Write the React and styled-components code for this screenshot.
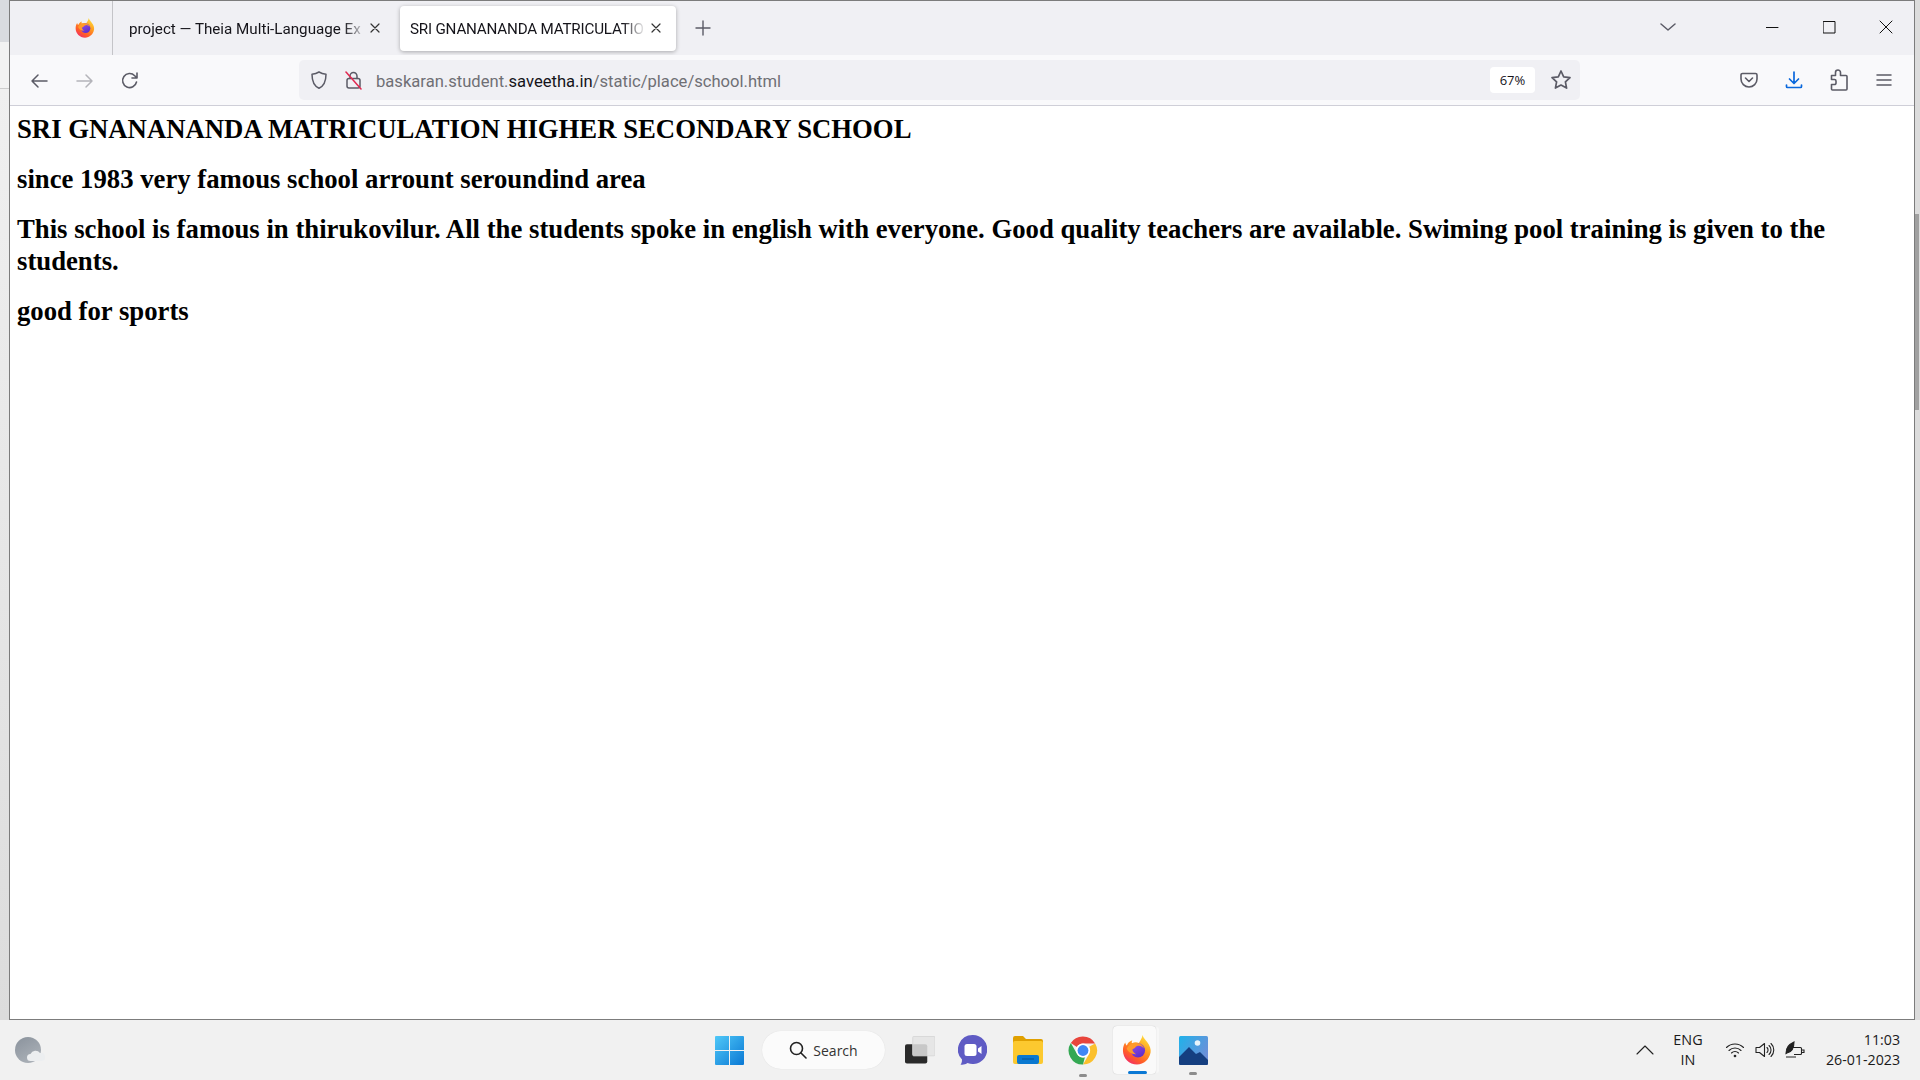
import React from "react";
import styled, { createGlobalStyle } from "styled-components";

const Global = createGlobalStyle`
  html, body { margin: 0; padding: 0; overflow: hidden; }
  body { font-family: "Open Sans", "Noto Sans", sans-serif; background: #f1f1f1; }
`;

const Screen = styled.div`
  width: 1920px;
  height: 1080px;
  display: flex;
  flex-direction: column;
  overflow: hidden;
`;
const Desktop = styled.div`
  height: 1020px;
  display: flex;
`;
const LeftEdge = styled.div`
  width: 9px;
  background: linear-gradient(
    #d9dbdf 0,
    #d9dbdf 42px,
    #f2f2f2 42px,
    #f2f2f2 88px,
    #cccccc 88px,
    #cccccc 89px,
    #f0f0f0 89px,
    #dcdcdc 100%
  );
`;
const RightEdge = styled.div`
  width: 5px;
  background: #dcdcdc;
  padding-top: 124px;
  box-sizing: border-box;
`;
const ScrollThumb = styled.div`
  width: 4px;
  height: 196px;
  margin-top: 90px;
  background: #a0a0a0;
`;
const Win = styled.div`
  flex: 1;
  display: flex;
  flex-direction: column;
  border: 1px solid #7c7c7c;
  background: #fff;
`;

const TabBar = styled.div`
  height: 54px;
  flex: none;
  display: flex;
  align-items: center;
  background: #f0f0f4;
`;
const PinnedTab = styled.div`
  width: 103px;
  height: 100%;
  box-sizing: border-box;
  display: flex;
  align-items: center;
  justify-content: center;
  padding-left: 47px;
  border-right: 1px solid #c4c4c8;
`;
const Tab = styled.div`
  width: ${(p) => p.$w}px;
  height: 45px;
  flex: none;
  padding-left: ${(p) => p.$pl}px;
  box-sizing: border-box;
  display: flex;
  align-items: center;
  border-radius: 4px;
  background: ${(p) => (p.$active ? "#fff" : "transparent")};
  box-shadow: ${(p) => (p.$active ? "0 1px 4px rgba(0,0,0,.3)" : "none")};
  color: #15141a;
  font-family: "Roboto", "Open Sans", sans-serif;
  font-size: 15.2px;
`;
const TabTitle = styled.span`
  width: ${(p) => p.$w}px;
  flex: none;
  padding-top: 1px;
  letter-spacing: ${(p) => p.$ls || 0}px;
  white-space: nowrap;
  -webkit-mask-image: linear-gradient(to right, #000 90%, transparent);
  mask-image: linear-gradient(to right, #000 90%, transparent);
`;
const TabClose = styled.span`
  margin-left: ${(p) => p.$ml}px;
  display: flex;
`;
const NewTab = styled.span`
  margin-left: 19px;
  display: flex;
`;
const TabSpacer = styled.div`
  flex: 1;
`;
const WindowButtons = styled.div`
  display: flex;
  align-items: center;
  padding-right: 20px;
  margin-top: -2px;
`;
const WinButton = styled.span`
  display: flex;
  width: 16px;
  justify-content: center;
  margin-left: ${(p) => p.$ml}px;
`;

const Toolbar = styled.div`
  height: 50px;
  flex: none;
  display: flex;
  align-items: center;
  background: #f9f9fb;
  border-bottom: 1px solid #cfcfd8;
`;
const NavButton = styled.span`
  display: flex;
  width: 20px;
  justify-content: center;
  margin-top: 1px;
  margin-left: ${(p) => p.$ml}px;
`;
const UrlBar = styled.div`
  width: 1281px;
  height: 40px;
  margin-left: 159px;
  box-sizing: border-box;
  display: flex;
  align-items: center;
  border-radius: 5px;
  background: #f0f0f4;
  padding-left: 10px;
`;
const UrlIcon = styled.span`
  display: flex;
  margin-left: ${(p) => p.$ml || 0}px;
`;
const UrlText = styled.div`
  flex: 1;
  margin-left: 13px;
  padding-top: 2px;
  font-family: "Roboto", "Open Sans", sans-serif;
  font-size: 16.6px;
  color: #6f6f74;
  white-space: nowrap;
`;
const UrlDomain = styled.span`
  color: #15141a;
`;
const ZoomPill = styled.div`
  width: 45px;
  height: 26px;
  display: flex;
  align-items: center;
  justify-content: center;
  border-radius: 4px;
  background: #fff;
  color: #15141a;
  font-size: 13px;
`;
const StarWrap = styled.span`
  display: flex;
  margin: 0 8px 0 15px;
`;
const ToolIcon = styled.span`
  display: flex;
  width: 20px;
  justify-content: center;
  margin-left: ${(p) => p.$ml}px;
`;

const Page = styled.main`
  flex: 1;
  padding: 0 7px;
  color: #000;
  font-family: "Liberation Serif", "Times New Roman", serif;
  font-weight: 700;
  font-size: 26.72px;
  line-height: 32px;
`;
const Line = styled.p`
  margin: 0;
  padding-top: ${(p) => p.$pt}px;
`;

const Taskbar = styled.footer`
  height: 60px;
  flex: none;
  display: flex;
  align-items: center;
  background: #f1f1f1;
`;
const Weather = styled.span`
  display: flex;
  margin-left: 15px;
`;
const TaskIcon = styled.span`
  position: relative;
  display: flex;
  width: 30px;
  justify-content: center;
  margin-left: ${(p) => p.$ml}px;
`;
const SearchPill = styled.div`
  width: 123px;
  height: 38px;
  margin-left: 18px;
  box-sizing: border-box;
  display: flex;
  align-items: center;
  justify-content: center;
  gap: 6px;
  border-radius: 19px;
  background: #fbfbfb;
  box-shadow: 0 0 1px rgba(0, 0, 0, 0.12);
  color: #333;
  font-size: 14px;
`;
const ActiveSlot = styled.div`
  position: relative;
  width: 43px;
  height: 48px;
  margin-left: 15px;
  padding-left: 9px;
  box-sizing: border-box;
  display: flex;
  align-items: center;
  border-radius: 4px;
  background: #fafafa;
  box-shadow: 0 0 1px rgba(0, 0, 0, 0.25), 4px 0 0 -1px #f7f7f7;
`;
const RunningMark = styled.span`
  position: absolute;
  left: ${(p) => p.$left || "50%"};
  bottom: ${(p) => p.$b}px;
  width: ${(p) => p.$w}px;
  height: 3px;
  margin-left: ${(p) => -p.$w / 2}px;
  border-radius: 2px;
  background: ${(p) => p.$c};
`;
const TrayLang = styled.div`
  width: 40px;
  margin-left: 12px;
  text-align: center;
  color: #1a1a1a;
  font-size: 14.4px;
  line-height: 20px;
`;
const TrayIcon = styled.span`
  display: flex;
  width: 22px;
  justify-content: center;
  margin-left: ${(p) => p.$ml}px;
`;
const Clock = styled.div`
  margin-left: 16px;
  width: 78px;
  text-align: right;
  white-space: nowrap;
  color: #1a1a1a;
  font-size: 14.2px;
  line-height: 20px;
`;

const Stroke = ({ w, h = w, c = "#5b5b66", sw = 1.6, children }) => (
  <svg width={w} height={h} viewBox={`0 0 ${w} ${h}`} fill="none" stroke={c} strokeWidth={sw} strokeLinecap="round" strokeLinejoin="round">
    {children}
  </svg>
);

const FirefoxLogo = ({ size }) => (
  <svg width={size} height={size} viewBox="0 0 32 32">
    <defs>
      <linearGradient id={`ffbody${size}`} x1="0.85" y1="0.05" x2="0.25" y2="1">
        <stop offset="0" stopColor="#ffe03d" />
        <stop offset="0.4" stopColor="#ff9a1f" />
        <stop offset="0.75" stopColor="#ff5a2a" />
        <stop offset="1" stopColor="#f22c6a" />
      </linearGradient>
      <linearGradient id={`ffglobe${size}`} x1="0.2" y1="0" x2="0.8" y2="1">
        <stop offset="0" stopColor="#8f4ee8" />
        <stop offset="1" stopColor="#5b2bc8" />
      </linearGradient>
    </defs>
    <path
      d="M22 0c.5 3 2.800 4.600 4.800 7.400C29.900 11.400 31 15 30.500 18.500 29.400 26 23.300 31.500 16 31.500 7.700 31.500 1 24.900 1 16.500 1 13 2 10 3.500 8c.2 1.500.8 2.600 1.700 3.300C6 8.500 8 6.500 11 5.500c-.7 1.300-.8 2.400-.3 3.300 2.300-1.200 5-1.300 7.300-.3C19.800 5.700 21.500 3 22 0z"
      fill={`url(#ffbody${size})`}
    />
    <circle cx="17" cy="16.500" r="7.600" fill={`url(#ffglobe${size})`} />
    <path d="M5 14.500c2-4 6-6.500 11-6 3.500.4 6.500 2.800 7.500 6-1.600-2.200-4-3.400-6.300-3.100-1.700.2-2.800 1.100-3.200 2.300l-3 1.800c.5 2.200 2 4 4 5-4.500.2-8.800-2.300-10-6z" fill="#ff9a2a" />
  </svg>
);

const ChromeLogo = () => (
  <svg width="31" height="31" viewBox="0 0 32 32">
    <path d="M16 1a15 15 0 0 1 13 7.500H16a7.500 7.500 0 0 0-6.500 3.800L3 8A15 15 0 0 1 16 1z" fill="#e8453c" />
    <path d="M29 8.500a15 15 0 0 1-13 22.500l6.500-11.300A7.500 7.500 0 0 0 22.500 12z" fill="#fbc02d" />
    <path d="M16 31A15 15 0 0 1 3 8l6.500 11.500A7.500 7.500 0 0 0 18 23.100z" fill="#34a853" />
    <circle cx="16" cy="16" r="7.400" fill="#fff" />
    <circle cx="16" cy="16" r="5.800" fill="#3f87f5" />
  </svg>
);

export default function App() {
  return (
    <Screen>
      <Global />
      <Desktop>
        <LeftEdge />
        <Win>
          <TabBar>
            <PinnedTab>
              <FirefoxLogo size={20} />
            </PinnedTab>
            <Tab $w={287} $pl={16}>
              <TabTitle $w={238}>project — Theia Multi-Language Ex</TabTitle>
              <TabClose $ml={2}>
                <Stroke w={12} c="#333" sw={1.2}>
                  <path d="M2 2l8 8M10 2l-8 8" />
                </Stroke>
              </TabClose>
            </Tab>
            <Tab $active $w={276} $pl={10}>
              <TabTitle $w={236} $ls={-0.2}>SRI GNANANANDA MATRICULATIO</TabTitle>
              <TabClose $ml={4}>
                <Stroke w={12} c="#333" sw={1.2}>
                  <path d="M2 2l8 8M10 2l-8 8" />
                </Stroke>
              </TabClose>
            </Tab>
            <NewTab>
              <Stroke w={16} sw={1.4}>
                <path d="M8 1v14M1 8h14" />
              </Stroke>
            </NewTab>
            <TabSpacer />
            <WindowButtons>
              <Stroke w={16} h={10} sw={1.5}>
                <path d="M1 2l7 6 7-6" />
              </Stroke>
              <WinButton $ml={88}>
                <Stroke w={13} c="#111" sw={1}>
                  <path d="M0 6.500h12" />
                </Stroke>
              </WinButton>
              <WinButton $ml={41}>
                <Stroke w={13} c="#111" sw={1}>
                  <rect x="0.500" y="0.500" width="11.500" height="11.500" />
                </Stroke>
              </WinButton>
              <WinButton $ml={41}>
                <Stroke w={14} c="#111" sw={1}>
                  <path d="M1 1l12 12M13 1L1 13" />
                </Stroke>
              </WinButton>
            </WindowButtons>
          </TabBar>
          <Toolbar>
            <NavButton $ml={19}>
              <Stroke w={18} sw={1.5}>
                <path d="M17 9H2M8 3L2 9l6 6" />
              </Stroke>
            </NavButton>
            <NavButton $ml={26}>
              <Stroke w={18} c="#b4b4ba" sw={1.5}>
                <path d="M1 9h15M10 3l6 6-6 6" />
              </Stroke>
            </NavButton>
            <NavButton $ml={25}>
              <Stroke w={18} sw={1.6}>
                <path d="M15.500 10a7 7 0 1 1-1.800-6.300L16 6M16 1v5h-5" />
              </Stroke>
            </NavButton>
            <UrlBar>
              <UrlIcon>
                <Stroke w={20} sw={1.5}>
                  <path d="M10 2c2 1.300 4 2 7 2.200 0 7-1.500 11.500-7 14-5.500-2.500-7-7-7-14C6 4 8 3.300 10 2z" />
                </Stroke>
              </UrlIcon>
              <UrlIcon $ml={16}>
                <svg width="18" height="20" viewBox="0 0 18 20" fill="none" strokeLinecap="round">
                  <rect x="2" y="8.500" width="13" height="9.500" rx="2" stroke="#5b5b66" strokeWidth="1.500" />
                  <path d="M5 8.500V6a3.500 3.500 0 0 1 7 0v2.500" stroke="#5b5b66" strokeWidth="1.500" />
                  <path d="M1 2l15 17" stroke="#e22850" strokeWidth="1.500" />
                </svg>
              </UrlIcon>
              <UrlText>
                baskaran.student.<UrlDomain>saveetha.in</UrlDomain>/static/place/school.html
              </UrlText>
              <ZoomPill>67%</ZoomPill>
              <StarWrap>
                <Stroke w={22} sw={1.7}>
                  <path d="M11 2l2.700 5.800 6.300.8-4.600 4.300 1.200 6.200L11 16l-5.600 3.100 1.200-6.200L2 8.600l6.300-.8z" />
                </Stroke>
              </StarWrap>
            </UrlBar>
            <ToolIcon $ml={159}>
              <Stroke w={18} sw={1.6}>
                <path d="M2.500 2.500h13a1.500 1.500 0 0 1 1.500 1.500v4a8 8 0 0 1-16 0V4a1.500 1.500 0 0 1 1.500-1.500z" />
                <path d="M5.500 7L9 10.500 12.500 7" />
              </Stroke>
            </ToolIcon>
            <ToolIcon $ml={25}>
              <Stroke w={18} c="#0a68dc" sw={1.7}>
                <path d="M9 1v11M4.500 8L9 12.500 13.500 8M1.500 14v1.500a1 1 0 0 0 1 1h13a1 1 0 0 0 1-1V14" />
              </Stroke>
            </ToolIcon>
            <ToolIcon $ml={25}>
              <Stroke w={18} h={22} sw={1.6}>
                <path d="M1.500 6.500H5.500V3.500a2.500 2.500 0 0 1 5 0V6.500H16a1 1 0 0 1 1 1V20a1 1 0 0 1-1 1H2.500a1 1 0 0 1-1-1V15.500H4.500a1.500 1.500 0 0 0 1.500-1.500V12a1.500 1.500 0 0 0-1.500-1.500H1.500z" />
              </Stroke>
            </ToolIcon>
            <ToolIcon $ml={25}>
              <Stroke w={16} h={14} sw={1.5}>
                <path d="M1 2h14M1 7h14M1 12h14" />
              </Stroke>
            </ToolIcon>
          </Toolbar>
          <Page>
            <Line $pt={7}>SRI GNANANANDA MATRICULATION HIGHER SECONDARY SCHOOL</Line>
            <Line $pt={18}>since 1983 very famous school arrount seroundind area</Line>
            <Line $pt={18}>
              This school is famous in thirukovilur. All the students spoke in english with everyone. Good quality teachers are available. Swiming pool training is given to the students.
            </Line>
            <Line $pt={18}>good for sports</Line>
          </Page>
        </Win>
        <RightEdge>
          <ScrollThumb />
        </RightEdge>
      </Desktop>
      <Taskbar>
        <Weather>
          <svg width="30" height="28" viewBox="0 0 30 28">
            <defs>
              <linearGradient id="weather" x1="0" y1="0" x2="0.6" y2="1">
                <stop offset="0" stopColor="#8a929c" />
                <stop offset="1" stopColor="#aab0b7" />
              </linearGradient>
            </defs>
            <circle cx="13" cy="14" r="13" fill="url(#weather)" />
            <path d="M15.500 25a3.500 3.500 0 0 1 0-7 5.500 5.500 0 0 1 9.500-1 4 4 0 0 1 2 8z" fill="#eceef0" />
          </svg>
        </Weather>
        <TaskIcon $ml={669}>
          <svg width="29" height="29" viewBox="0 0 29 29">
            <defs>
              <linearGradient id="winlogo" x1="0" y1="0" x2="1" y2="1">
                <stop offset="0" stopColor="#4fc8f8" />
                <stop offset="1" stopColor="#0a78d4" />
              </linearGradient>
            </defs>
            <path d="M1 0h13v14H0V1a1 1 0 0 1 1-1zM15 0h13a1 1 0 0 1 1 1v13H15zM0 15h14v14H1a1 1 0 0 1-1-1zM15 15h14v13a1 1 0 0 1-1 1H15z" fill="url(#winlogo)" />
          </svg>
        </TaskIcon>
        <SearchPill>
          <Stroke w={18} c="#222" sw={1.6}>
            <circle cx="7.500" cy="7.500" r="6" />
            <path d="M12 12l5 5" />
          </Stroke>
          Search
        </SearchPill>
        <TaskIcon $ml={20}>
          <svg width="31" height="28" viewBox="0 0 31 28">
            <rect x="0" y="8" width="23" height="20" rx="2" fill="#2a2a2a" />
            <rect x="8" y="0" width="23" height="20" rx="1" fill="#e4e4e4" fillOpacity="0.85" stroke="#d8d8d8" />
          </svg>
        </TaskIcon>
        <TaskIcon $ml={22}>
          <svg width="29" height="30" viewBox="0 0 29 30">
            <path d="M14.500 0a14.500 14.500 0 1 1-5 28c-2 1.500-5 2-7 1.500 1-1 1.500-2.500 1.500-5A14.500 14.500 0 0 1 14.500 0z" fill="#5f5bc4" />
            <rect x="6.500" y="9" width="12" height="12" rx="2.500" fill="#fff" />
            <path d="M20 13.500l3.500-2.500v8l-3.500-2.500z" fill="#fff" />
          </svg>
        </TaskIcon>
        <TaskIcon $ml={26}>
          <svg width="30" height="28" viewBox="0 0 30 28">
            <path d="M0 2a2 2 0 0 1 2-2h8l3 3h15a2 2 0 0 1 2 2v4H0z" fill="#e0a000" />
            <rect x="0" y="5" width="30" height="23" rx="2" fill="#fcc92f" />
            <rect x="4" y="19" width="22" height="9" rx="2" fill="#0a78d0" />
            <path d="M9 23h12" stroke="#075a9e" strokeWidth="1.200" />
          </svg>
        </TaskIcon>
        <TaskIcon $ml={25}>
          <ChromeLogo />
          <RunningMark $w={8} $b={-11} $c="#8c8c8c" />
        </TaskIcon>
        <ActiveSlot>
          <FirefoxLogo size={30} />
          <RunningMark $left="57%" $w={19} $b={0} $c="#0a78d4" />
        </ActiveSlot>
        <TaskIcon $ml={22}>
          <svg width="29" height="29" viewBox="0 0 29 29">
            <defs>
              <linearGradient id="photos" x1="0" y1="0" x2="1" y2="0.600">
                <stop offset="0" stopColor="#1fb2ea" />
                <stop offset="1" stopColor="#6d8fd8" />
              </linearGradient>
            </defs>
            <rect width="29" height="29" rx="1.500" fill="url(#photos)" />
            <circle cx="18.500" cy="7" r="2.800" fill="#e8f4fb" />
            <path d="M0 21L10 11l7 7 4-2 8 8v3.500a1.500 1.500 0 0 1-1.500 1.500h-26A1.500 1.500 0 0 1 0 27.500z" fill="#153f80" />
          </svg>
          <RunningMark $w={8} $b={-10} $c="#8c8c8c" />
        </TaskIcon>
        <TrayIcon $ml={426}>
          <Stroke w={18} h={10} c="#222" sw={1.1}>
            <path d="M1 9l8-8 8 8" />
          </Stroke>
        </TrayIcon>
        <TrayLang>
          ENG
          <br />
          IN
        </TrayLang>
        <TrayIcon $ml={16}>
          <Stroke w={20} h={16} c="#222" sw={1.1}>
            <path d="M1.500 5.500a12 12 0 0 1 17 0M4 8.500a8.500 8.500 0 0 1 12 0M6.500 11a5 5 0 0 1 7 0" />
            <circle cx="10" cy="14" r="0.800" fill="#222" />
          </Stroke>
        </TrayIcon>
        <TrayIcon $ml={8}>
          <Stroke w={20} h={18} c="#222" sw={1.1}>
            <path d="M1 6.500h3.500L9.500 2.500v13l-5-4H1zM12 6.500a3.500 3.500 0 0 1 0 5M14 4.500a6 6 0 0 1 0 9M16 2.500a9 9 0 0 1 0 13" />
          </Stroke>
        </TrayIcon>
        <TrayIcon $ml={8}>
          <svg width="20" height="18" viewBox="0 0 20 18" fill="none" stroke="#222" strokeWidth="1.100">
            <path d="M6 6.500h9.500a1 1 0 0 1 1 1v5a1 1 0 0 1-1 1H9M17 9h2v2.500h-2M1 16h10" />
            <path d="M1 12.500C1 6 4 3.500 9 1c0 6-2 10-7 11z" fill="#222" />
          </svg>
        </TrayIcon>
        <Clock>
          11:03
          <br />
          26-01-2023
        </Clock>
      </Taskbar>
    </Screen>
  );
}
